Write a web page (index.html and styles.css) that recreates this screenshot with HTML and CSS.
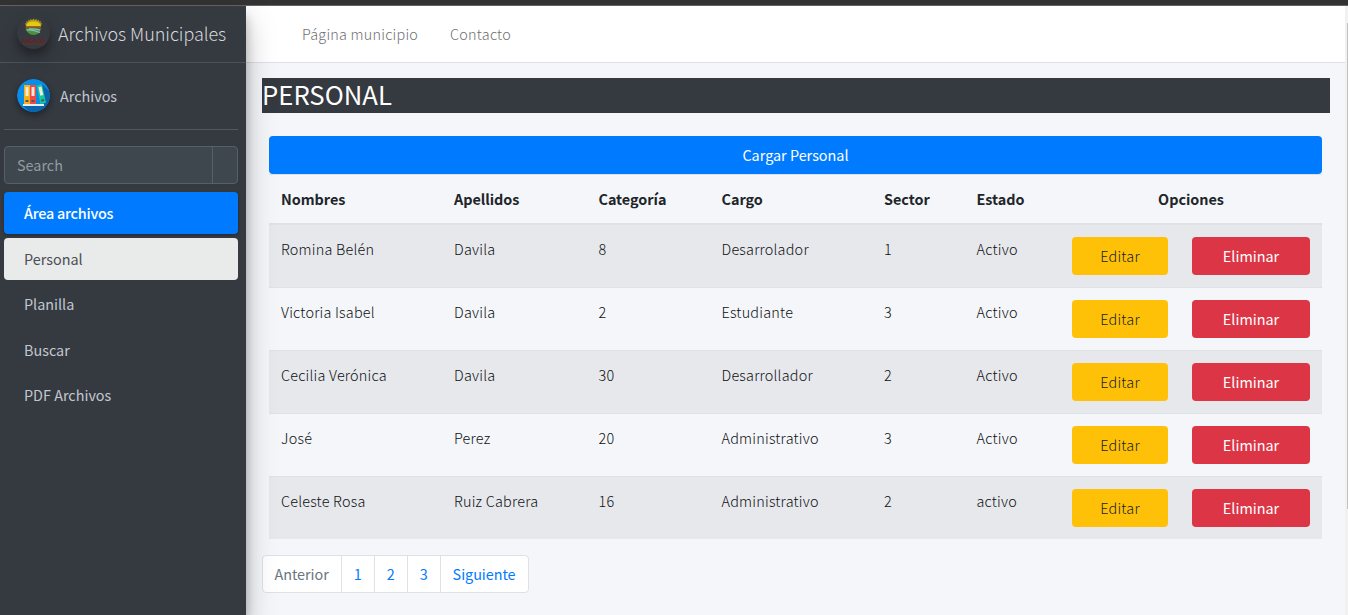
FILE: index.html
```html
<!DOCTYPE html>
<html lang="es">
<head>
<meta charset="utf-8">
<title>Archivos Municipales</title>
<link rel="stylesheet" href="styles.css">
</head>
<body>
<div class="topline"></div>
<div class="wrapper">
  <aside class="sidebar">
    <a class="brand">
      <svg class="brand-logo" viewBox="0 0 33 33">
        <path d="m8 7 1.500.5L9.500 5l1.700.8.300-2.200 1.500 1.200.8-2 1.200 1.500L16.500 2.500l1.200 1.800 1.500-1.500.8 2 1.700-1.200.2 2.200 1.800-.8v2.500L25 7l-1 3H9Z" fill="#b5991f"/>
        <path d="M9 10.500a7.600 6 0 0 1 15 0Z" fill="#e3cb12"/>
        <path d="M8.500 10.500h15.500v2H8.500Z" fill="#96521f"/>
        <path d="M9 12.500h15q-1 6.500-7.500 6.500T9 12.500Z" fill="#4c8f3e"/>
        <path d="M9.500 14q7-.5 13.500 2.500M12 13q6-.5 11 1.200" stroke="#86bdb0" stroke-width="1.300" fill="none"/>
        <text x="4.500" y="26.500" class="logo-name" textLength="24" lengthAdjust="spacingAndGlyphs">ANGACO</text>
        <path d="M6 28h21" stroke="#593a2e" stroke-width=".8"/>
      </svg>
      <span class="brand-text">Archivos Municipales</span>
    </a>
    <div class="side-body">
      <div class="user-panel">
        <svg class="user-logo" viewBox="0 0 33 33">
          <defs><clipPath id="disc"><circle cx="16.500" cy="16.500" r="16.500"/></clipPath></defs>
          <g clip-path="url(#disc)">
            <path d="M0 0h33v33H0Z" fill="#078eeb"/>
            <path d="m25 5 8 8v20H13l-7-6h21Z" fill="#0764ad"/>
            <path d="M7 6h6v19H7Z" fill="#f9ae16"/>
            <path d="M13 6h6v19h-6Z" fill="#f14a45"/>
            <path d="m19.500 6.500 5.500-1.200 4 18.500-5.500 1.200Z" fill="#16c997"/>
            <path d="M8.500 8h3v9h-3ZM14.500 8h3v9h-3ZM21.500 8.300l3-.7 1.800 8.500-3 .7Z" fill="#eee9d9"/>
            <path d="M8.500 21h3v2h-3ZM14.500 21h3v2h-3ZM24 20.700l3-.6.400 2-3 .6Z" fill="#4e5a60"/>
            <path d="M6 25h21v2H6Z" fill="#e6edf1"/>
          </g>
        </svg>
        <span class="user-name">Archivos</span>
      </div>
      <div class="search"><span class="search-field">Search</span><span class="search-btn"></span></div>
      <nav class="side-nav">
        <a class="side-link primary">Área archivos</a>
        <a class="side-link current">Personal</a>
        <a class="side-link">Planilla</a>
        <a class="side-link">Buscar</a>
        <a class="side-link">PDF Archivos</a>
      </nav>
    </div>
  </aside>
  <main class="main">
    <header class="navbar"><a>Página municipio</a><a>Contacto</a></header>
    <section class="content">
      <h1 class="title">PERSONAL</h1>
      <div class="panel">
        <a class="load-btn">Cargar Personal</a>
        <div class="table">
          <div class="row head"><span>Nombres</span><span>Apellidos</span><span>Categoría</span><span>Cargo</span><span>Sector</span><span>Estado</span><span class="options">Opciones</span></div>
          <div class="row"><span>Romina Belén</span><span>Davila</span><span>8</span><span>Desarrolador</span><span>1</span><span>Activo</span><a class="btn edit">Editar</a><a class="btn delete">Eliminar</a></div>
          <div class="row"><span>Victoria Isabel</span><span>Davila</span><span>2</span><span>Estudiante</span><span>3</span><span>Activo</span><a class="btn edit">Editar</a><a class="btn delete">Eliminar</a></div>
          <div class="row"><span>Cecilia Verónica</span><span>Davila</span><span>30</span><span>Desarrollador</span><span>2</span><span>Activo</span><a class="btn edit">Editar</a><a class="btn delete">Eliminar</a></div>
          <div class="row"><span>José</span><span>Perez</span><span>20</span><span>Administrativo</span><span>3</span><span>Activo</span><a class="btn edit">Editar</a><a class="btn delete">Eliminar</a></div>
          <div class="row"><span>Celeste Rosa</span><span>Ruiz Cabrera</span><span>16</span><span>Administrativo</span><span>2</span><span>activo</span><a class="btn edit">Editar</a><a class="btn delete">Eliminar</a></div>
        </div>
      </div>
      <nav class="pagination"><a class="disabled">Anterior</a><a>1</a><a>2</a><a>3</a><a>Siguiente</a></nav>
    </section>
  </main>
  <div class="scrollbar"><div class="thumb"></div></div>
</div>
</body>
</html>
```
FILE: styles.css
```css
* { box-sizing: border-box; }
body {
  margin: 0;
  height: 615px;
  overflow: hidden;
  background: #f4f6f9;
  color: #212529;
  font: 400 14.4px/24px "Noto Sans CJK SC", sans-serif;
}
.topline { height: 6px; background: #333; border-bottom: 1px solid #686465; }
.wrapper { display: flex; height: 609px; }

.sidebar {
  position: relative;
  z-index: 1;
  width: 246px;
  background: #353940;
  box-shadow: 0 14px 28px rgba(0,0,0,.25), 0 10px 10px rgba(0,0,0,.22);
  color: #c2c7d0;
}
.brand {
  display: flex;
  height: 57px;
  padding: 11px 0 0 17px;
  border-bottom: 1px solid #4b545c;
  white-space: nowrap;
}
.brand-logo, .user-logo {
  flex: none;
  width: 33px;
  height: 33px;
  border-radius: 50%;
  box-shadow: 0 3px 6px rgba(0,0,0,.16), 0 3px 6px rgba(0,0,0,.23);
}
.brand-logo { margin-top: -1px; box-shadow: 0 10px 20px rgba(0,0,0,.19), 0 6px 6px rgba(0,0,0,.23); }
.user-logo { margin-top: 1px; }
.logo-name { font: 700 6px "Liberation Sans", sans-serif; fill: #7c1a1c; }
.brand-text { margin-left: 8px; padding-top: 4px; font-size: 18px; font-weight: 300; letter-spacing: -.06px; color: #d6d8da; }
.side-body { padding: 0 8px 0 4px; }
.user-panel { display: flex; height: 67px; padding: 15px 0 0 13px; border-bottom: 1px solid #4f5962; }
.user-name { margin: 6px 0 0 10px; }
.search { display: flex; height: 38px; margin-top: 16px; border: 1px solid #56606a; border-radius: 4px; background: #3f474e; }
.search-field { width: 208px; padding: 6px 12px; border-right: 1px solid #56606a; color: #939ba2; }
.side-nav { display: flex; flex-direction: column; gap: 3.500px; margin-top: 8px; }
.side-link { height: 42px; padding: 9px 20px; border-radius: 4px; }
.primary { background: #007bff; color: #fff; font-weight: 500; letter-spacing: -.22px; box-shadow: 0 1px 3px rgba(0,0,0,.3); }
.current { background: #e9eaea; color: #4b4f54; }

.main { width: 1099px; }
.navbar { display: flex; gap: 32px; height: 57px; padding: 16px 56px; background: #fff; border-bottom: 1px solid #dee2e6; color: #707070; font-weight: 300; letter-spacing: .22px; }
.content { padding: 15px 15px 0 16px; }
.title { height: 35px; margin: 0; background: #353940; color: #fff; font-size: 25.700px; line-height: 31px; font-weight: 400; }
.panel { padding: 23px 8px 0 7px; }
.load-btn { display: block; height: 38px; border-radius: 4px; background: #007bff; color: #fff; line-height: 38px; text-align: center; }
.row {
  display: grid;
  grid-template-columns: 173px 144.500px 123px 162.500px 92.500px 95.500px 120px 142px;
  height: 63px;
  padding-top: 12px;
  border-top: 1px solid #dee2e6;
  color: #0c0f12;
  font-weight: 300;
  letter-spacing: .22px;
}
.row > span { padding-left: 12px; }
.row:nth-child(even) { background: #e7e8ec; }
.row.head { height: 51px; border-bottom: 2px solid #dee2e6; color: #212529; font-weight: 700; letter-spacing: -.03px; }
.row.head + .row { height: 62px; border-top: 0; }
.row > .options { grid-column: span 2; padding: 0; text-align: center; }
.btn { height: 38px; margin: 0 12px; border-radius: 4px; line-height: 38px; text-align: center; }
.edit { background: #ffc107; color: #141d29; }
.delete { background: #dc3545; color: #fff; font-weight: 400; letter-spacing: 0; }
.pagination { display: flex; width: max-content; height: 38px; margin-top: 16px; border: 1px solid #dee2e6; border-radius: 4px; background: #fff; color: #007bff; letter-spacing: -.04px; }
.pagination a { padding: 6px 12px; }
.pagination a + a { border-left: 1px solid #dee2e6; }
.pagination .disabled { padding-left: 11.500px; color: #6c757d; }

.scrollbar { width: 3px; padding: 17px 0 0 2px; background: #f1f1f1; }
.thumb { height: 486px; background: #c1c1c1; }
```
